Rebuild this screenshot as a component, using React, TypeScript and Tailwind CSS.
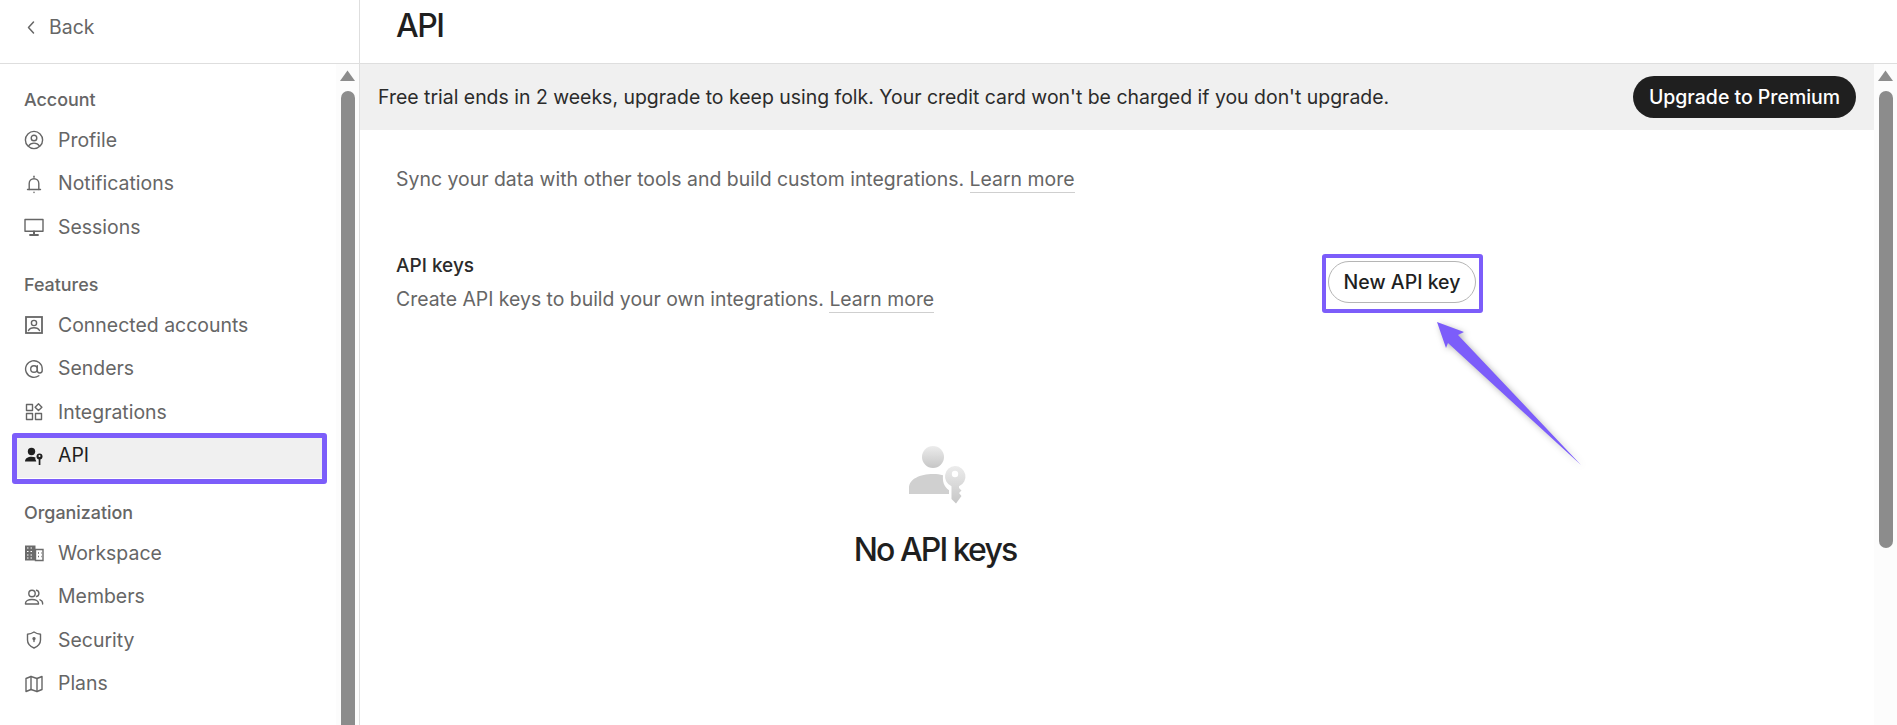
import React from "react";

const I = ({ children }: { children: React.ReactNode }) => (
  <svg width="20" height="20" viewBox="0 0 20 20" fill="none" stroke="currentColor" strokeWidth="1.4" strokeLinecap="round" strokeLinejoin="round" className="shrink-0">
    {children}
  </svg>
);

const Profile = () => (<I><circle cx="10" cy="10" r="8.6" /><circle cx="10" cy="8" r="2.8" /><path d="M4.6 16c1.2-2 3-2.9 5.4-2.9s4.200.9 5.400 2.900" /></I>);
const BellIcon = () => (<I><path d="M3.500 15.500h13" /><path d="M5.200 15.500V9.500a4.800 4.800 0 0 1 9.600 0v6" /><path d="M10 3.200V2.300" /><path d="M10 18.300v.2" /></I>);
const Screen = () => (<I><rect x="1" y="2.500" width="18" height="11.800" /><path d="M10 14.500v3" strokeWidth="2" /><path d="M6 18h8" strokeWidth="1.800" /></I>);
const Connected = () => (<I><rect x="2" y="2" width="16" height="16" strokeLinejoin="miter" strokeWidth="1.800" /><circle cx="10" cy="8" r="2.600" /><path d="M4.500 15.500c1-2 3-2.700 5.500-2.700s4.500.7 5.500 2.700" /></I>);
const At = () => (<I><circle cx="10" cy="10" r="3.300" /><path d="M13.300 6.800v4.700a2.400 2.400 0 0 0 4.900 0V10a8.300 8.300 0 1 0-3.400 6.700" /></I>);
const Grid = () => (<I><rect x="2.500" y="2.500" width="6" height="6" /><rect x="2.500" y="11.500" width="6" height="6" /><rect x="11.500" y="11.500" width="6" height="6" /><path d="M14.500 1.800l3.400 3.400-3.400 3.400-3.400-3.400z" /></I>);
const ApiIcon = () => (
  <svg width="20" height="20" viewBox="0 0 20 20" fill="#1f1f1f" className="shrink-0">
    <circle cx="7.500" cy="5.500" r="3.700" />
    <path d="M1 15.500c0-3.300 3-4.800 6.500-4.800 1.500 0 2.900.3 4 .9-.4 1.200-.1 2.400.7 3.300v.6z" />
    <circle cx="15.500" cy="10.500" r="3" />
    <rect x="14.700" y="12" width="1.700" height="7" />
    <circle cx="15.500" cy="10" r="1" fill="#f0f0f0" />
  </svg>
);
const Building = () => (
  <svg width="20" height="20" viewBox="0 0 20 20" className="shrink-0" fill="none">
    <path d="M1 2.500h10.500v15H1z" fill="#6b6b6b" />
    <path d="M11.500 6.500H19v11h-7.500z" stroke="#6b6b6b" strokeWidth="1.400" />
    <path d="M3 5h1.500M6.500 5H8M3 8.500h1.500M6.500 8.500H8M3 12h1.500M6.500 12H8M3 15h1.500M6.500 15H8" stroke="#fff" strokeWidth="1.200" />
    <path d="M14 10h1M17 10h.6M14 13.500h1M17 13.500h.6" stroke="#6b6b6b" strokeWidth="1.400" />
  </svg>
);
const MembersIcon = () => (<I><circle cx="8" cy="6.500" r="3.200" /><path d="M1.500 17v-.8c0-2.300 2.500-3.700 6.500-3.700s6.500 1.400 6.500 3.700v.8z" /><path d="M12.500 3.300a3.200 3.200 0 0 1 0 6.200" /><path d="M16 12.800c1.500.6 2.600 1.700 2.600 3.400v.8" /></I>);
const Shield = () => (<I><path d="M10 2c2 1.400 4 2 6.500 2.200V10c0 3.800-2.700 6.400-6.500 8-3.800-1.600-6.500-4.200-6.500-8V4.200C6 4 8 3.400 10 2z" /><circle cx="10" cy="8.600" r="1" fill="currentColor" /><path d="M10 9v2.600" /></I>);
const MapIcon = () => (<I><path d="M2 4.500l5-2 6 2 5-2v13l-5 2-6-2-5 2z" /><path d="M7 2.500v13M13 4.500v13" /></I>);

const Row = ({ icon, label, active }: { icon: React.ReactNode; label: string; active?: boolean }) => (
  <div className={"relative flex h-[43.500px] items-center text-[19.450px] " + (active ? "text-[#1f1f1f]" : "text-[#666666]")}>
    {active && <div className="absolute left-[12px] right-[9px] top-[-1px] bottom-[-6px] rounded-[3px] border-[5px] border-[#7c5dfa] bg-[#f0f0f0] shadow-[inset_0_-1px_0_#ffffff]" />}
    <div className="relative flex items-center gap-[14px] pl-[24px]">
      {icon}
      <span>{label}</span>
    </div>
  </div>
);

const Label = ({ children }: { children: React.ReactNode }) => (
  <div className="flex h-[30px] items-center pl-[24px] pt-[3px] text-[17.900px] font-[450] text-[#666666] mb-[4.500px]">{children}</div>
);

const Scrollbar = ({ thumb }: { thumb: string }) => (
  <div className="flex w-[23px] shrink-0 flex-col items-center bg-[#fcfcfc] pt-[6px]">
    <svg width="15" height="11" viewBox="0 0 15 11" className="shrink-0"><path d="M7.500 0.500L15 11H0z" fill="#8c8c8c" /></svg>
    <div className={"mt-[10px] w-[14px] rounded-full bg-[#8c8c8c] " + thumb} />
  </div>
);

export default function App() {
  return (
    <div className="relative flex h-[725px] w-[1897px] overflow-hidden bg-white text-[#1f1f1f]" style={{ fontFamily: "Inter, 'Liberation Sans', sans-serif" }}>
      <aside className="flex w-[360px] shrink-0 flex-col border-r border-[#dedede]">
        <div className="flex h-[64px] shrink-0 items-start gap-[10px] border-b border-[#dedede] pl-[25px] pt-[13px] text-[19.450px] text-[#666666]">
          <svg width="14" height="26" viewBox="0 0 14 26" fill="none" stroke="#666666" strokeWidth="1.500" strokeLinecap="round" strokeLinejoin="round" className="mt-[1px]"><path d="M8.500 8L3.500 13.500l5 5.500" /></svg>
          <span>Back</span>
        </div>
        <div className="flex min-h-0 flex-1">
          <nav className="flex-1 pt-[20px]">
            <Label>Account</Label>
            <Row icon={<Profile />} label="Profile" />
            <Row icon={<BellIcon />} label="Notifications" />
            <Row icon={<Screen />} label="Sessions" />
            <div className="h-[20px]" />
            <Label>Features</Label>
            <Row icon={<Connected />} label="Connected accounts" />
            <Row icon={<At />} label="Senders" />
            <Row icon={<Grid />} label="Integrations" />
            <Row icon={<ApiIcon />} label="API" active />
            <div className="h-[19.500px]" />
            <Label>Organization</Label>
            <Row icon={<Building />} label="Workspace" />
            <Row icon={<MembersIcon />} label="Members" />
            <Row icon={<Shield />} label="Security" />
            <Row icon={<MapIcon />} label="Plans" />
          </nav>
          <Scrollbar thumb="flex-1 rounded-b-none" />
        </div>
      </aside>

      <main className="flex min-w-0 flex-1 flex-col">
        <header className="flex h-[64px] shrink-0 items-start border-b border-[#dedede] pl-[36px] pt-[6px]">
          <h1 className="text-[32px] leading-[40px] font-medium tracking-[-0.045em] text-[#1f1f1f]">API</h1>
        </header>
        <div className="flex min-h-0 flex-1">
          <div className="min-w-0 flex-1">
            <div className="flex h-[66px] items-center justify-between bg-[#f0f0f0] pl-[18px] pr-[18px] text-[19.470px] text-[#2b2b2b]">
              <span className="pt-[1px]">Free trial ends in 2 weeks, upgrade to keep using folk. Your credit card won't be charged if you don't upgrade.</span>
              <button className="flex h-[42px] w-[223px] items-center justify-center rounded-full bg-[#1f1f1f] pt-[1px] font-medium text-white">Upgrade to Premium</button>
            </div>
            <div className="w-[1116px] pl-[36px]">
              <p className="mt-[36px] text-[19.470px] leading-[26px] text-[#666666]">
                Sync your data with other tools and build custom integrations.{" "}
                <span className="border-b border-[#cfcfcf] pb-[1px]">Learn more</span>
              </p>
              <div className="mt-[60px] flex items-center justify-between">
                <div>
                  <div className="pt-[1px] text-[19px] leading-[26px] font-[450] text-[#2b2b2b]">API keys</div>
                  <div className="mt-[7px] text-[19.400px] leading-[26px] text-[#666666]">
                    Create API keys to build your own integrations.{" "}
                    <span className="border-b border-[#cfcfcf] pb-[1px]">Learn more</span>
                  </div>
                </div>
                <button className="flex h-[42px] w-[148px] items-center justify-center rounded-full border border-[#b5b5b5] bg-white pt-[2px] text-[19.500px] font-[450] text-[#1f1f1f]">New API key</button>
              </div>
              <div className="mt-[129px] flex flex-col items-center">
                <svg width="66" height="66" viewBox="905 440 66 66" className="translate-x-[2px]">
                  <defs>
                    <linearGradient id="g1" x1="0" y1="0" x2="0" y2="1"><stop offset="0" stopColor="#ececec" /><stop offset="1" stopColor="#c6c6c6" /></linearGradient>
                  </defs>
                  <circle cx="933" cy="456" r="11" fill="url(#g1)" />
                  <path d="M909 493v-6c0-9 11-14 24-14 4 0 7 .4 10 1.200-.5 6 .5 11 6 15v3.800z" fill="#d0d0d0" />
                  <path d="M955 465a10.500 10.500 0 0 1 4 20.200v1.800l2.500 2.500-2.500 2.500 2.500 3-5.500 7.500-4.500-4.500v-12.800a10.500 10.500 0 0 1 3.500-20.200z" fill="url(#g1)" />
                  <circle cx="955" cy="473" r="3.200" fill="#fff" />
                </svg>
                <div className="mt-[23px] -translate-x-[1px] text-[32px] leading-[40px] font-medium tracking-[-0.06em] text-[#1f1f1f]">No API keys</div>
              </div>
            </div>
          </div>
          <Scrollbar thumb="h-[457px]" />
        </div>
      </main>

      <div className="absolute left-[1322px] top-[254px] h-[59px] w-[161px] rounded-[3px] border-[4px] border-[#7c5dfa]" />
      <svg className="absolute left-[1430px] top-[315px] drop-shadow-[2px_2px_3px_rgba(0,0,0,0.3)]" width="155" height="155" viewBox="1430 315 155 155">
        <path d="M1437 322L1464 332L1458 335L1581 465L1448 343L1446 348Z" fill="#7c5dfa" />
      </svg>
    </div>
  );
}
